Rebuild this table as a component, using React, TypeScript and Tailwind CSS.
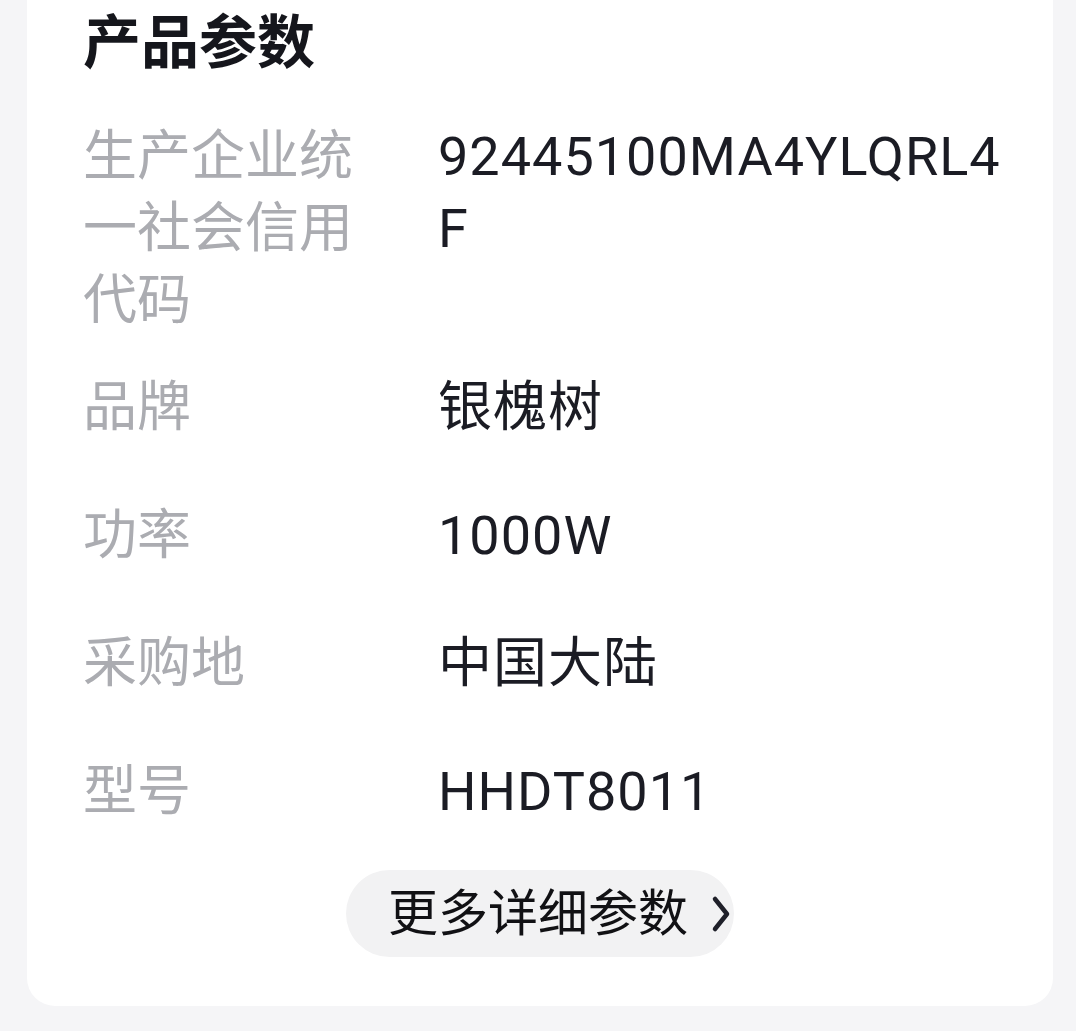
import React from 'react';

const rows: { label: string; value: string }[] = [
    { label: '生产企业统一社会信用代码', value: '92445100MA4YLQRL4F' },
    { label: '品牌', value: '银槐树' },
    { label: '功率', value: '1000W' },
    { label: '采购地', value: '中国大陆' },
    { label: '型号', value: 'HHDT8011' },
];

function ChevronRight() {
    return (
        <svg width="22" height="38" viewBox="0 0 22 38" fill="none" className="shrink-0">
            <path d="M5 4 L17 19 L5 34" stroke="#1f2029" strokeWidth="4.5" strokeLinecap="round" strokeLinejoin="round" />
        </svg>
    );
}

export default function App() {
    return (
        <div
            className="min-h-[1031px] w-full bg-[#f5f5f7] pl-[27px] pr-[23px]"
            style={{ fontFamily: 'Roboto, "Noto Sans CJK SC", sans-serif' }}
        >
            <div className="bg-white rounded-b-[28px] pl-[56px] pr-[36px] pt-[7px] pb-[49px]">
                {/* Title */}
                <h2 className="text-[58px] leading-[72px] font-bold text-[#15161c]">产品参数</h2>

                {/* Parameter rows */}
                <div className="mt-[42px] flex flex-col gap-[35px]">
                    {rows.map(row => (
                        <div key={row.label} className="flex items-start min-h-[93px]">
                            <div className="w-[300px] shrink-0 text-[54px] leading-[72px] text-[#abacb1]">
                                {row.label}
                            </div>
                            <div className="ml-[55px] flex-1 min-w-0 break-all text-[54px] leading-[72px] tracking-[1px] text-[#1b1c24]">
                                {row.value}
                            </div>
                        </div>
                    ))}
                </div>

                {/* More button */}
                <div className="mt-[21px] mr-[20px] flex justify-center">
                    <button className="h-[87px] flex items-center gap-[22px] rounded-full bg-[#f2f2f3] pl-[42px] pr-[2px]">
                        <span className="text-[50px] leading-none text-[#111114]">更多详细参数</span>
                        <ChevronRight />
                    </button>
                </div>
            </div>
        </div>
    );
}
